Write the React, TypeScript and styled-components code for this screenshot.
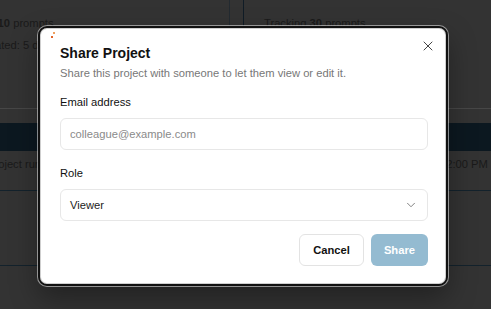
import * as React from 'react';
import styled, { createGlobalStyle } from 'styled-components';
import { X, ChevronDown } from 'lucide-react';

const GlobalStyle = createGlobalStyle`
  html, body {
    margin: 0;
    padding: 0;
    background: #333333;
  }
  body {
    font-family: "Liberation Sans", Arial, sans-serif;
  }
  * {
    box-sizing: border-box;
  }
`;

const Page = styled.div`
  position: relative;
  width: 491px;
  height: 309px;
  overflow: hidden;
  background: #333333;
  font-size: 11.2px;
  color: #1a1a1a;
`;

const Shifted = styled.div`
  margin-left: -68px;
  width: 640px;
`;

const Stats = styled.div`
  display: grid;
  grid-template-columns: 298px 1fr;
  column-gap: 13px;
  height: 109px;
  border-bottom: 1px solid #474747;
`;

const StatCard = styled.div<{ $edge: string }>`
  display: flex;
  flex-direction: column;
  gap: 8px;
  padding: 16px 20px 0;
  border-left: ${(p) => (p.$edge === 'left' ? '1px solid #101c26' : 'none')};
  border-right: ${(p) => (p.$edge === 'right' ? '1px solid #232a30' : 'none')};
  white-space: nowrap;
`;

const StatLine = styled.div`
  line-height: 14px;
  b {
    font-weight: 700;
  }
`;

const TableHead = styled.div`
  margin-top: 14px;
  height: 28px;
  background: #0c1820;
`;

const Row = styled.div<{ $height: number }>`
  display: grid;
  grid-template-columns: 453px 1fr;
  height: ${(p) => p.$height}px;
  padding: 6px 0 0 55px;
  border-bottom: 1px solid #13222c;
  white-space: nowrap;
  line-height: 14px;
`;

const Dialog = styled.div`
  position: absolute;
  left: 38px;
  top: 26px;
  width: 410px;
  display: flex;
  flex-direction: column;
  padding: 17px 18px 18px 20px;
  background: #ffffff;
  border: 2px solid #111111;
  border-radius: 9px;
  box-shadow: inset 0 0 0 1px #cfcfcf, 0 0 0 1px rgba(255, 255, 255, 0.5),
    0 12px 28px rgba(0, 0, 0, 0.35);
  color: #111111;
`;

const Sparkle = styled.svg`
  position: absolute;
  left: 10px;
  top: 4px;
`;

const CloseButton = styled.button`
  position: absolute;
  top: 10px;
  right: 10px;
  width: 16px;
  height: 16px;
  padding: 0;
  border: none;
  background: none;
  color: #444444;
  display: flex;
  align-items: center;
  justify-content: center;
`;

const Header = styled.div`
  display: flex;
  flex-direction: column;
  gap: 3px;
  margin-bottom: 13px;
`;

const Title = styled.h2`
  margin: 0;
  font-size: 14px;
  line-height: 17px;
  font-weight: 700;
  color: #111111;
`;

const Subtitle = styled.p`
  margin: 0;
  font-size: 11.2px;
  line-height: 16px;
  color: #777777;
`;

const Field = styled.div`
  display: flex;
  flex-direction: column;
  gap: 8px;
  & + & {
    margin-top: 15px;
  }
`;

const Label = styled.label`
  font-size: 11.2px;
  line-height: 16px;
  color: #111111;
`;

const Input = styled.input`
  height: 32px;
  padding: 0 9px;
  border: 1px solid #e7e7e7;
  border-radius: 6px;
  font-family: "Liberation Sans", Arial, sans-serif;
  font-size: 11.2px;
  color: #222222;
  outline: none;
  &::placeholder {
    color: #8a8a8a;
  }
`;

const Select = styled.div`
  height: 32px;
  display: flex;
  align-items: center;
  justify-content: space-between;
  padding: 0 9px;
  border: 1px solid #e7e7e7;
  border-radius: 6px;
  font-size: 11.2px;
  color: #222222;
  svg {
    color: #707070;
  }
`;

const Actions = styled.div`
  display: flex;
  justify-content: flex-end;
  gap: 7px;
  margin-top: 13px;
`;

const Button = styled.button<{ $primary?: boolean }>`
  height: 32px;
  padding: 0 13px;
  border-radius: 6px;
  border: ${(p) => (p.$primary ? 'none' : '1px solid #e3e3e3')};
  background: ${(p) => (p.$primary ? '#94bbd1' : '#ffffff')};
  color: ${(p) => (p.$primary ? '#ffffff' : '#111111')};
  font-family: "Liberation Sans", Arial, sans-serif;
  font-size: 11.2px;
  font-weight: 700;
`;

export default function App() {
  return (
    <>
      <GlobalStyle />
      <Page>
        <Shifted>
          <Stats>
            <StatCard $edge="right">
              <StatLine>Tracking <b>10</b> prompts</StatLine>
              <StatLine>Last updated: 5 days ago</StatLine>
            </StatCard>
            <StatCard $edge="left">
              <StatLine>Tracking <b>30</b> prompts</StatLine>
            </StatCard>
          </Stats>
          <TableHead />
          <Row $height={40}>
            <span>Project run completed</span>
            <span>12:00 PM EST</span>
          </Row>
          <Row $height={75} />
        </Shifted>

        <Dialog role="dialog">
          <Sparkle width="6" height="8" viewBox="0 0 6 8">
            <rect x="3" y="0" width="2" height="2" fill="#f0a060" />
            <rect x="1" y="4" width="2" height="2" fill="#e0642a" />
          </Sparkle>
          <CloseButton aria-label="Close">
            <X size={16} strokeWidth={1.5} />
          </CloseButton>
          <Header>
            <Title>Share Project</Title>
            <Subtitle>Share this project with someone to let them view or edit it.</Subtitle>
          </Header>
          <Field>
            <Label>Email address</Label>
            <Input placeholder="colleague@example.com" />
          </Field>
          <Field>
            <Label>Role</Label>
            <Select>
              <span>Viewer</span>
              <ChevronDown size={14} strokeWidth={1.5} />
            </Select>
          </Field>
          <Actions>
            <Button>Cancel</Button>
            <Button $primary>Share</Button>
          </Actions>
        </Dialog>
      </Page>
    </>
  );
}
